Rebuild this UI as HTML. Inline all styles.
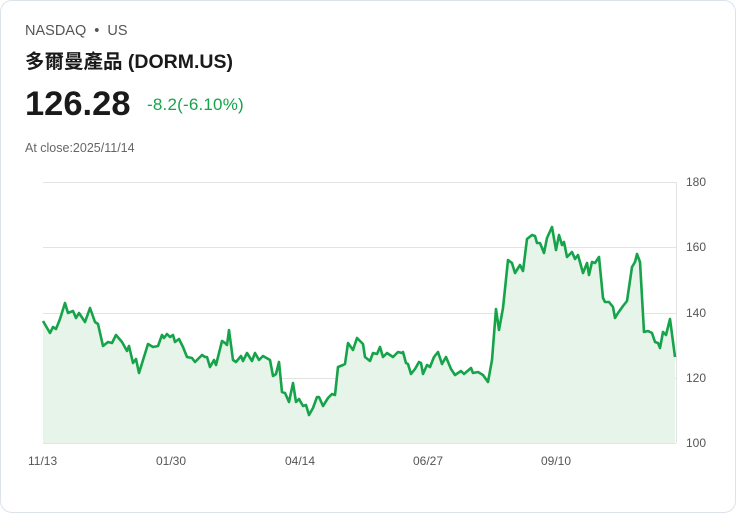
<!DOCTYPE html>
<html><head><meta charset="utf-8"><style>
body{margin:0;background:#fff;font-family:"Liberation Sans","Noto Sans CJK TC",sans-serif;}
.card{position:absolute;left:0;top:0;width:734px;height:511px;border:1px solid #dde3ec;border-radius:12px;background:#fff;}
.t{position:absolute;white-space:nowrap;}
</style></head><body>
<div class="card"></div>
<div class="t" style="left:25px;top:23px;font-size:14.5px;color:#555;">NASDAQ &nbsp;•&nbsp; US</div>
<div class="t" style="left:25px;top:45px;font-size:19.5px;font-weight:bold;color:#1a1a1a;">多爾曼產品 (DORM.US)</div>
<div class="t" style="left:25px;top:85px;font-size:34.5px;font-weight:bold;color:#1a1a1a;">126.28</div>
<div class="t" style="left:147px;top:95px;font-size:17px;color:#16a34a;letter-spacing:0.2px;">-8.2(-6.10%)</div>
<div class="t" style="left:25px;top:141px;font-size:12.5px;color:#666;">At close:2025/11/14</div>
<svg width="736" height="513" style="position:absolute;left:0;top:0">
<g stroke="#e3e3e3" stroke-width="1">
<line x1="43" y1="182.5" x2="676" y2="182.5"/><line x1="43" y1="247.5" x2="676" y2="247.5"/>
<line x1="43" y1="313.5" x2="676" y2="313.5"/><line x1="43" y1="378.5" x2="676" y2="378.5"/>
<line x1="43" y1="443.5" x2="676" y2="443.5"/><line x1="676.5" y1="182" x2="676.5" y2="443"/>
</g>
<g font-size="12" fill="#555" font-family="Liberation Sans,sans-serif">
<text x="686" y="186">180</text><text x="686" y="251">160</text><text x="686" y="317">140</text><text x="686" y="382">120</text><text x="686" y="447">100</text>
<text x="28" y="465">11/13</text><text x="156" y="465">01/30</text><text x="285" y="465">04/14</text><text x="413" y="465">06/27</text><text x="541" y="465">09/10</text>
</g>
<path id="p" fill="#e6f4ea" stroke="none" d="M43,321 L50,333 53,327 56,329 60,319 65,303 68,313 73,311 76,318 79,313 85,322 90,308 95,322 98,324 103,346 108,342 112,343 116,335 122,342 127,351 129,346 133,363 136,359 139,373 148,344 153,347 158,346 162,335 164,338 167,334 170,337 173,335 175,342 179,339 183,347 187,357 192,358 195,362 202,355 205,357 207,357 210,367 214,360 216,365 222,341 225,343 227,345 229,330 233,360 236,362 241,356 243,361 247,353 252,361 255,353 259,360 263,356 270,360 273,376 276,374 279,362 282,392 285,393 289,402 293,383 296,402 299,399 303,406 306,405 309,415 313,408 317,397 319,397 323,406 328,398 332,394 335,395 338,367 343,365 345,364 348,343 353,350 357,338 363,344 365,357 370,361 373,353 377,354 380,347 383,357 387,353 393,357 398,352 402,353 403,352 406,363 408,364 411,374 415,369 419,362 421,363 423,374 427,365 430,367 434,357 438,352 442,364 446,357 451,369 455,375 461,371 464,374 471,368 473,373 478,372 483,375 488,382 492,360 496,309 499,330 503,308 508,260 512,263 515,273 520,265 523,271 527,239 532,235 535,236 537,243 540,243 544,253 547,238 552,227 556,250 559,235 562,245 564,242 567,257 572,252 575,259 578,255 583,273 587,263 589,275 592,262 595,263 599,257 603,298 605,302 609,302 613,307 615,318 618,313 623,306 627,301 632,267 635,262 637,254 640,262 644,332 648,331 652,333 655,342 658,343 660,348 663,332 666,335 670,319 675,357 L675,443 L43,443 Z"/>
<path fill="none" stroke="#16a34a" stroke-width="2.6" stroke-linejoin="round" d="M43,321 L50,333 53,327 56,329 60,319 65,303 68,313 73,311 76,318 79,313 85,322 90,308 95,322 98,324 103,346 108,342 112,343 116,335 122,342 127,351 129,346 133,363 136,359 139,373 148,344 153,347 158,346 162,335 164,338 167,334 170,337 173,335 175,342 179,339 183,347 187,357 192,358 195,362 202,355 205,357 207,357 210,367 214,360 216,365 222,341 225,343 227,345 229,330 233,360 236,362 241,356 243,361 247,353 252,361 255,353 259,360 263,356 270,360 273,376 276,374 279,362 282,392 285,393 289,402 293,383 296,402 299,399 303,406 306,405 309,415 313,408 317,397 319,397 323,406 328,398 332,394 335,395 338,367 343,365 345,364 348,343 353,350 357,338 363,344 365,357 370,361 373,353 377,354 380,347 383,357 387,353 393,357 398,352 402,353 403,352 406,363 408,364 411,374 415,369 419,362 421,363 423,374 427,365 430,367 434,357 438,352 442,364 446,357 451,369 455,375 461,371 464,374 471,368 473,373 478,372 483,375 488,382 492,360 496,309 499,330 503,308 508,260 512,263 515,273 520,265 523,271 527,239 532,235 535,236 537,243 540,243 544,253 547,238 552,227 556,250 559,235 562,245 564,242 567,257 572,252 575,259 578,255 583,273 587,263 589,275 592,262 595,263 599,257 603,298 605,302 609,302 613,307 615,318 618,313 623,306 627,301 632,267 635,262 637,254 640,262 644,332 648,331 652,333 655,342 658,343 660,348 663,332 666,335 670,319 675,357"/>
</svg>
</body></html>
